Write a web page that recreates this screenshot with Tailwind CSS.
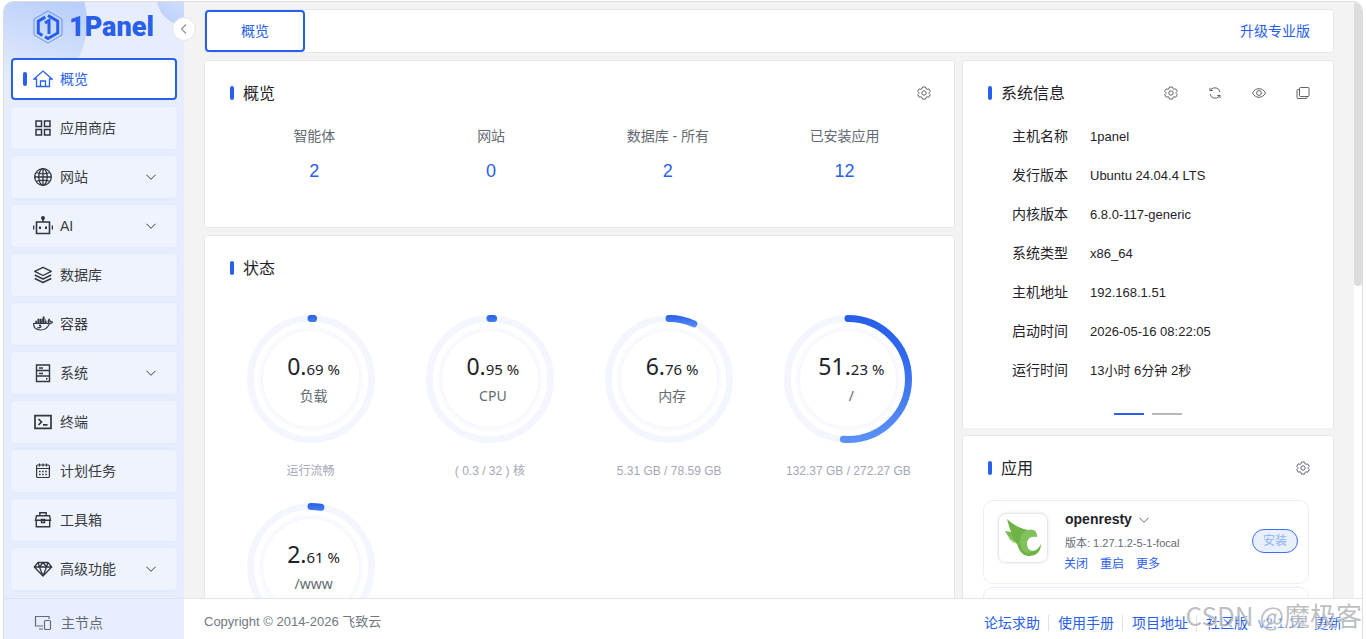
<!DOCTYPE html>
<html lang="zh-CN">
<head>
<meta charset="utf-8">
<meta name="viewport" content="width=device-width, initial-scale=1">
<title>1Panel</title>
<script src="https://cdn.jsdelivr.net/npm/@tailwindcss/browser@4"></script>
</head>
<body class="h-screen overflow-hidden bg-white pl-[3px] pt-px pr-[3px] font-['Liberation_Sans','Noto_Sans_CJK_SC',sans-serif] text-sm text-[#1f2329]">
<svg class="absolute size-0" aria-hidden="true">
  <defs>
    <linearGradient id="arcShort" gradientUnits="userSpaceOnUse" x1="0" y1="0" x2="0" y2="12"><stop offset="0" stop-color="#265ee9"/><stop offset="1" stop-color="#5a90f6"/></linearGradient>
    <linearGradient id="arcLong" gradientUnits="userSpaceOnUse" x1="0" y1="0" x2="0" y2="128"><stop offset="0" stop-color="#265ee9"/><stop offset="0.3" stop-color="#2f69ec"/><stop offset="1" stop-color="#5c92f6"/></linearGradient>
    <radialGradient id="halo" gradientUnits="userSpaceOnUse" cx="64" cy="64" r="57"><stop offset="0.84" stop-color="#f5f7fe"/><stop offset="0.95" stop-color="#fff"/></radialGradient>
  </defs>
  <symbol id="dial" viewBox="0 0 128 128">
    <circle cx="64" cy="64" r="60.500" fill="none" stroke="#f3f6fe" stroke-width="7"/>
    <circle cx="64" cy="64" r="57" fill="url(#halo)"/>
    <circle cx="64" cy="64" r="48" fill="#fff"/>
  </symbol>
  <symbol id="down" viewBox="0 0 12 12"><path d="M1.500 3.800 6 8.300l4.500-4.500" fill="none" stroke="currentColor"/></symbol>
  <symbol id="gear" viewBox="0 0 14 14"><g fill="none" stroke="currentColor" stroke-linejoin="round"><path d="M5.500 1h3l.5 1.700 1.100.6 1.700-.4 1.500 2.500L12.100 6.700v.7l1.200 1.300-1.500 2.500-1.700-.4-1.100.6-.5 1.700h-3L5 11.400l-1.100-.6-1.700.4-1.500-2.500 1.200-1.300v-.7L.7 5.400l1.500-2.500 1.700.4L5 2.700z"/><circle cx="7" cy="7" r="2.200"/></g></symbol>
</svg>

<div class="flex h-full flex-col overflow-hidden rounded-t-[10px] border border-b-0 border-[#dcdddf] bg-[#f3f3f4]">
  <div class="flex min-h-0 flex-1">

    <aside class="relative w-[180px] shrink-0 bg-[#e7edfd] text-[#393c43]">
      <svg class="absolute left-0 top-0 h-[120px] w-[180px]" viewBox="0 0 180 120" aria-hidden="true">
        <defs>
          <linearGradient id="blobA" x1="0.7" y1="0" x2="0.4" y2="1"><stop offset="0.3" stop-color="#b9cffa"/><stop offset="0.85" stop-color="#e7edfd"/></linearGradient>
          <linearGradient id="blobB" x1="0.2" y1="1" x2="0.8" y2="0.3"><stop offset="0" stop-color="#bdd1fa"/><stop offset="1" stop-color="#dbe6fd"/></linearGradient>
        </defs>
        <circle cx="2" cy="20" r="81" fill="url(#blobA)"/>
        <circle cx="180" cy="-4" r="27" fill="url(#blobB)"/>
      </svg>
      <button type="button" aria-label="收起菜单" class="absolute -right-3 top-[15px] z-10 flex size-6 items-center justify-center rounded-full border border-[#dfe3ec] bg-white text-[#8a8e96]">
        <svg class="size-3" viewBox="0 0 12 12"><path d="M8 1.500 3.500 6 8 10.500" fill="none" stroke="currentColor" stroke-width="1.100"/></svg>
      </button>
      <div class="relative flex h-full flex-col overflow-hidden px-[7px]">
        <a href="#" class="flex h-14 shrink-0 items-start gap-1.5 pl-[22px] pt-[7px] text-[#2860ec]">
          <svg class="h-9 w-[30px]" viewBox="0 0 30 36" fill="none" stroke="currentColor">
            <path d="M15 2 29 10v16L15 34 1 26V10z" stroke-width=".9" opacity=".65"/>
            <path d="m15 6.500 9.700 5.600v4.400M24.700 16v8L15 29.600l-3-1.800M9.500 26.400 5.300 24V12.100l7-4" stroke-width="3"/>
            <path d="m12 14 4-2.500V25" stroke-width="3"/>
          </svg>
          <span class="font-[Roboto] text-[27px] font-black leading-9">1Panel</span>
        </a>
        <nav class="flex flex-col gap-[7px]">
          <a href="#" class="flex h-[42px] shrink-0 items-center rounded border-2 border-[#2860ec] bg-white pl-[10px] text-[#2860ec]">
            <span class="h-3.5 w-1 rounded-sm bg-[#2860ec]"></span>
            <svg class="ml-[6px] mr-[7px] size-5" viewBox="0 0 20 20" fill="none" stroke="currentColor" stroke-width="1.300"><path d="M1 10 10 2l9 8h-2.500v7.500H12.500V12H7.500v5.500h-4V10zM7.500 17.500h5"/></svg>概览</a>
          <a href="#" class="flex h-[42px] shrink-0 items-center gap-[7px] rounded bg-[#eff3fe] pl-[22px] pr-5 shadow-[0_0_3px_#dbe4fb]">
            <svg class="size-5" viewBox="0 0 20 20" fill="none" stroke="#33363d" stroke-width="1.500"><path d="M3 3h5.500v5.500H3zM11.500 3H17v5.500h-5.500zM3 11.500h5.500V17H3zM11.500 11.500H17V17h-5.500z"/></svg>应用商店</a>
          <a href="#" class="flex h-[42px] shrink-0 items-center gap-[7px] rounded bg-[#eff3fe] pl-[22px] pr-5 shadow-[0_0_3px_#dbe4fb]">
            <svg class="size-5" viewBox="0 0 20 20" fill="none" stroke="#33363d" stroke-width="1.300"><circle cx="10" cy="10" r="8.300"/><ellipse cx="10" cy="10" rx="4.200" ry="8.300"/><path d="M10 1.500v17M1.500 10h17M3 5.500c4 1.500 10 1.500 14 0M3 14.500c4-1.500 10-1.500 14 0"/></svg>网站<svg class="ml-auto size-3"><use href="#down"/></svg></a>
          <a href="#" class="flex h-[42px] shrink-0 items-center gap-[7px] rounded bg-[#eff3fe] pl-[22px] pr-5 shadow-[0_0_3px_#dbe4fb]">
            <svg class="size-5" viewBox="0 0 20 20" fill="none" stroke="#33363d" stroke-width="1.600"><path d="M3.500 6h13v11.500h-13zM10 6V2M.5 9.500v4M19.500 9.500v4"/><path d="M7 10.500v2.500M13 10.500v2.500" stroke-width="2"/><circle cx="10" cy="2" r="1.200" fill="#33363d"/></svg>AI<svg class="ml-auto size-3"><use href="#down"/></svg></a>
          <a href="#" class="flex h-[42px] shrink-0 items-center gap-[7px] rounded bg-[#eff3fe] pl-[22px] pr-5 shadow-[0_0_3px_#dbe4fb]">
            <svg class="size-5" viewBox="0 0 20 20" fill="none" stroke="#33363d" stroke-width="1.400" stroke-linejoin="round"><path d="m10 2.300 8.300 4L10 10.500l-8.300-4.200zM1.700 10l8.300 4 8.300-4M1.700 13.500l8.300 4 8.300-4"/></svg>数据库</a>
          <a href="#" class="flex h-[42px] shrink-0 items-center gap-[7px] rounded bg-[#eff3fe] pl-[22px] pr-5 shadow-[0_0_3px_#dbe4fb]">
            <svg class="size-5" viewBox="0 0 20 20" fill="none" stroke="#33363d" stroke-width="1.200"><path d="M.6 9.500h13.600c1.200 0 1.700-1 1.300-2.200-.2-.8.100-1.500.5-2 .8.700 1.200 1.500 1.100 2.400 1-.2 1.800 0 2.400.4-.6 1-1.700 1.600-3.100 1.500-1.700 4.400-4.700 6.400-8.900 6.400-4.500 0-7-2.200-6.900-6.500z"/><path d="M2.300 7.900h12M4.500 5.800h8M9.700 3.600h2" stroke-width="2.100" stroke-dasharray="1.900 .4"/><path d="M4 14c2 0 3.500-.5 4.500-1.500"/><circle cx="7" cy="11.500" r=".5" fill="#33363d"/></svg>容器</a>
          <a href="#" class="flex h-[42px] shrink-0 items-center gap-[7px] rounded bg-[#eff3fe] pl-[22px] pr-5 shadow-[0_0_3px_#dbe4fb]">
            <svg class="size-5" viewBox="0 0 20 20" fill="none" stroke="#33363d" stroke-width="1.400"><path d="M3.500 2h13v16.500h-13zM3.500 7.500h13M3.500 13h13M6 5h4M6 10.500h4M13 15.800h1.500"/></svg>系统<svg class="ml-auto size-3"><use href="#down"/></svg></a>
          <a href="#" class="flex h-[42px] shrink-0 items-center gap-[7px] rounded bg-[#eff3fe] pl-[22px] pr-5 shadow-[0_0_3px_#dbe4fb]">
            <svg class="size-5" viewBox="0 0 20 20" fill="none" stroke="#33363d" stroke-width="1.700"><path d="M2 3.700h16v12.600H2zM5.500 7l3 3-3 3M10 12.800h4.500"/></svg>终端</a>
          <a href="#" class="flex h-[42px] shrink-0 items-center gap-[7px] rounded bg-[#eff3fe] pl-[22px] pr-5 shadow-[0_0_3px_#dbe4fb]">
            <svg class="size-5" viewBox="0 0 20 20" fill="none" stroke="#33363d" stroke-width="1.200"><rect x="3.600" y="4" width="12.800" height="12.500" rx="1"/><path d="M3.600 7.500h12.800M6.500 2.500v3M10 2.500v3M13.500 2.500v3"/><path d="M6 10.500h8M6 13.500h8" stroke-width="1.500" stroke-dasharray="1.600 1.500"/></svg>计划任务</a>
          <a href="#" class="flex h-[42px] shrink-0 items-center gap-[7px] rounded bg-[#eff3fe] pl-[22px] pr-5 shadow-[0_0_3px_#dbe4fb]">
            <svg class="size-5" viewBox="0 0 20 20" fill="none" stroke="#33363d" stroke-width="1.400"><path d="M3.500 5.700h13l1 4.500h-15zM3.300 10.200h13.400v6.600H3.300zM6.800 5.700V2.800h6.400v2.900M8.500 9.500h3v3h-3z"/></svg>工具箱</a>
          <a href="#" class="flex h-[42px] shrink-0 items-center gap-[7px] rounded bg-[#eff3fe] pl-[22px] pr-5 shadow-[0_0_3px_#dbe4fb]">
            <svg class="size-5" viewBox="0 0 20 20" fill="none" stroke="#33363d" stroke-width="1.300" stroke-linejoin="round"><path d="M5 3.500h10l3.700 4.500L10 17 1.300 8zM1.300 8h17.400M5 3.500 6.500 8 10 17l3.500-9L15 3.500M6.500 8 10 3.500 13.500 8"/></svg>高级功能<svg class="ml-auto size-3"><use href="#down"/></svg></a>
          <a href="#" aria-label="日志审计" class="h-[42px] shrink-0 rounded bg-[#eff3fe] shadow-[0_0_3px_#dbe4fb]"></a>
        </nav>
      </div>
    </aside>

    <main class="flex min-w-0 flex-1 flex-col gap-[7px] overflow-hidden pl-5 pr-5 pt-[7px]">
      <header class="flex h-11 shrink-0 items-center justify-between rounded border border-[#e4e7f0] bg-white pr-[23px]">
        <button type="button" class="h-[42px] w-[100px] rounded border-2 border-[#2860ec] text-[#2860ec]">概览</button>
        <a href="#" class="text-[#2860ec]">升级专业版</a>
      </header>
      <div class="flex gap-[7px]">
        <div class="flex min-w-0 flex-1 flex-col gap-[7px]">
          <section class="h-[168px] rounded border border-[#e4e7f0] bg-white px-[21px] pt-5">
            <div class="flex h-6 items-center pl-1">
              <span class="h-3.5 w-1 rounded-sm bg-[#2860ec]"></span>
              <h2 class="ml-[9px] pt-0.5 text-base">概览</h2>
              <button type="button" aria-label="设置" class="ml-auto text-[#5f636b]"><svg class="mr-[2px] size-3.5"><use href="#gear"/></svg></button>
            </div>
            <div class="mt-[21px] grid grid-cols-4 text-center text-[#646a73]">
              <div>智能体<a href="#" class="mt-[11px] block text-lg text-[#2860ec]">2</a></div>
              <div>网站<a href="#" class="mt-[11px] block text-lg text-[#2860ec]">0</a></div>
              <div>数据库 - 所有<a href="#" class="mt-[11px] block text-lg text-[#2860ec]">2</a></div>
              <div>已安装应用<a href="#" class="mt-[11px] block text-lg text-[#2860ec]">12</a></div>
            </div>
          </section>
          <section class="rounded border border-[#e4e7f0] bg-white px-[16px] pt-5">
            <div class="flex h-6 items-center pl-[9px]">
              <span class="h-3.5 w-1 rounded-sm bg-[#2860ec]"></span>
              <h2 class="ml-[9px] pt-0.5 text-base">状态</h2>
            </div>
            <div class="mt-[35px] grid grid-cols-4 gap-y-4 text-xs text-[#a3a7b5]">
              <div class="flex h-[172px] flex-col items-center">
                <div class="relative size-32">
                  <svg class="size-32" viewBox="0 0 128 128"><use href="#dial"/><path pathLength="100" d="M64 3.500a60.500 60.500 0 0 1 0 121a60.500 60.500 0 0 1 0-121" fill="none" stroke="url(#arcShort)" stroke-width="7" stroke-linecap="round" stroke-dasharray="0.69 200"/></svg>
                  <div class="absolute inset-0 flex flex-col items-center pl-1.5 pt-[35px] font-['Noto_Sans','Noto_Sans_CJK_SC',sans-serif]"><p class="text-[15px] leading-8 text-[#1f2329]"><span class="text-[23px]">0.</span>69 %</p><p class="text-sm leading-[22px] text-[#646a73]">负载</p></div>
                </div>
                <p class="mt-5">运行流畅</p>
              </div>
              <div class="flex h-[172px] flex-col items-center">
                <div class="relative size-32">
                  <svg class="size-32" viewBox="0 0 128 128"><use href="#dial"/><path pathLength="100" d="M64 3.500a60.500 60.500 0 0 1 0 121a60.500 60.500 0 0 1 0-121" fill="none" stroke="url(#arcShort)" stroke-width="7" stroke-linecap="round" stroke-dasharray="0.95 200"/></svg>
                  <div class="absolute inset-0 flex flex-col items-center pl-1.5 pt-[35px] font-['Noto_Sans','Noto_Sans_CJK_SC',sans-serif]"><p class="text-[15px] leading-8 text-[#1f2329]"><span class="text-[23px]">0.</span>95 %</p><p class="text-sm leading-[22px] text-[#646a73]">CPU</p></div>
                </div>
                <p class="mt-5">( 0.3 / 32 ) 核</p>
              </div>
              <div class="flex h-[172px] flex-col items-center">
                <div class="relative size-32">
                  <svg class="size-32" viewBox="0 0 128 128"><use href="#dial"/><path pathLength="100" d="M64 3.500a60.500 60.500 0 0 1 0 121a60.500 60.500 0 0 1 0-121" fill="none" stroke="url(#arcShort)" stroke-width="7" stroke-linecap="round" stroke-dasharray="6.76 200"/></svg>
                  <div class="absolute inset-0 flex flex-col items-center pl-1.5 pt-[35px] font-['Noto_Sans','Noto_Sans_CJK_SC',sans-serif]"><p class="text-[15px] leading-8 text-[#1f2329]"><span class="text-[23px]">6.</span>76 %</p><p class="text-sm leading-[22px] text-[#646a73]">内存</p></div>
                </div>
                <p class="mt-5">5.31 GB / 78.59 GB</p>
              </div>
              <div class="flex h-[172px] flex-col items-center">
                <div class="relative size-32">
                  <svg class="size-32" viewBox="0 0 128 128"><use href="#dial"/><path pathLength="100" d="M64 3.500a60.500 60.500 0 0 1 0 121a60.500 60.500 0 0 1 0-121" fill="none" stroke="url(#arcLong)" stroke-width="7" stroke-linecap="round" stroke-dasharray="51.23 200"/></svg>
                  <div class="absolute inset-0 flex flex-col items-center pl-1.5 pt-[35px] font-['Noto_Sans','Noto_Sans_CJK_SC',sans-serif]"><p class="text-[15px] leading-8 text-[#1f2329]"><span class="text-[23px]">51.</span>23 %</p><p class="text-sm leading-[22px] text-[#646a73]">/</p></div>
                </div>
                <p class="mt-5">132.37 GB / 272.27 GB</p>
              </div>
              <div class="flex h-[172px] flex-col items-center">
                <div class="relative size-32">
                  <svg class="size-32" viewBox="0 0 128 128"><use href="#dial"/><path pathLength="100" d="M64 3.500a60.500 60.500 0 0 1 0 121a60.500 60.500 0 0 1 0-121" fill="none" stroke="url(#arcShort)" stroke-width="7" stroke-linecap="round" stroke-dasharray="2.61 200"/></svg>
                  <div class="absolute inset-0 flex flex-col items-center pl-1.5 pt-[35px] font-['Noto_Sans','Noto_Sans_CJK_SC',sans-serif]"><p class="text-[15px] leading-8 text-[#1f2329]"><span class="text-[23px]">2.</span>61 %</p><p class="text-sm leading-[22px] text-[#646a73]">/www</p></div>
                </div>
              </div>
            </div>
          </section>
        </div>

        <div class="flex w-[372px] shrink-0 flex-col gap-[7px]">
          <section class="h-[368px] rounded-t border border-b-0 border-[#e4e7f0] bg-white px-[21px] pt-5">
            <div class="flex h-6 items-center pl-1">
              <span class="h-3.5 w-1 rounded-sm bg-[#2860ec]"></span>
              <h2 class="ml-[9px] pt-0.5 text-base">系统信息</h2>
              <div class="ml-auto mr-[2px] flex gap-[30px] text-[#5f636b]">
                <button type="button" aria-label="设置"><svg class="size-3.5"><use href="#gear"/></svg></button>
                <button type="button" aria-label="刷新"><svg class="size-3.5" viewBox="0 0 14 14" fill="none" stroke="currentColor"><path d="M12 6A5.200 5.200 0 0 0 3 3.500L2 4.500M2 1.800v2.700h2.700M2 8a5.200 5.200 0 0 0 9 2.500l1-1M12 12.200V9.500H9.300"/></svg></button>
                <button type="button" aria-label="显示"><svg class="size-3.5" viewBox="0 0 14 14" fill="none" stroke="currentColor"><path d="M.5 7C2 4.200 4.200 2.700 7 2.700S12 4.200 13.500 7C12 9.800 9.800 11.300 7 11.300S2 9.800.5 7z"/><circle cx="7" cy="7" r="2.400"/></svg></button>
                <button type="button" aria-label="复制"><svg class="size-3.5" viewBox="0 0 14 14" fill="none" stroke="currentColor"><rect x="3.500" y="1.500" width="9.500" height="9" rx="1"/><path d="M3.500 3.500H2a1 1 0 0 0-1 1v7a1 1 0 0 0 1 1h8a1 1 0 0 0 1-1v-1"/></svg></button>
              </div>
            </div>
            <dl class="mt-3 grid grid-cols-[78px_1fr] pl-7 text-[13px] leading-[39px] [&>dt]:text-sm [&>dt]:leading-[39px]">
              <dt>主机名称</dt><dd>1panel</dd>
              <dt>发行版本</dt><dd>Ubuntu 24.04.4 LTS</dd>
              <dt>内核版本</dt><dd>6.8.0-117-generic</dd>
              <dt>系统类型</dt><dd>x86_64</dd>
              <dt>主机地址</dt><dd>192.168.1.51</dd>
              <dt>启动时间</dt><dd>2026-05-16 08:22:05</dd>
              <dt>运行时间</dt><dd>13小时 6分钟 2秒</dd>
            </dl>
            <div class="mt-[23px] flex justify-center gap-2">
              <button type="button" aria-label="第 1 页" class="h-0.5 w-[30px] bg-[#2860ec]"></button>
              <button type="button" aria-label="第 2 页" class="h-0.5 w-[30px] bg-[#b5b8be]"></button>
            </div>
          </section>
          <section class="rounded border border-[#e4e7f0] bg-white pl-5 pr-[21px] pt-5">
            <div class="flex h-6 items-center pl-[5px]">
              <span class="h-3.5 w-1 rounded-sm bg-[#2860ec]"></span>
              <h2 class="ml-[9px] pt-0.5 text-base">应用</h2>
              <button type="button" aria-label="设置" class="ml-auto text-[#5f636b]"><svg class="mr-[2px] size-3.5"><use href="#gear"/></svg></button>
            </div>
            <article class="mt-5 mr-[3px] flex h-[84px] items-start rounded-[10px] border border-[#ecedf7] pl-[14px] pr-[10px] pt-[9px]">
              <div class="mt-[3px] flex size-[50px] items-center justify-center rounded-lg border border-[#e6e7ea] shadow-[0_0_3px_#e2e3e6]">
                <svg class="size-10" viewBox="0 0 40 40">
                  <path d="M5 19c3 2 6 2 9 2l1 5c-5-1-8-3-10-7z" fill="#a9d78d"/>
                  <path d="M2 13c5 0 9 2 13 6l1 6C9 23 5 19 2 13z" fill="#78bb50"/>
                  <path d="M4 1c8 7 14 10 22 11 6-1 8 3 8 7-7-2-11 3-10 8 1 8 10 8 14-1 0 8-5 12-12 12-7 0-10-6-12-12C10 21 7 12 4 1z" fill="#6db346"/>
                  <path d="M24 12h2c6-1 8 3 8 7-7-2-11 3-10 8 0 4 2 6 5 6-3 3-8 2-10-2-4-7-2-16 5-19z" fill="#82c25c"/>
                </svg>
              </div>
              <div class="ml-4 text-xs">
                <h3 class="flex items-center gap-1.5 pl-px text-sm font-bold leading-[19px]">openresty<svg class="size-3 text-[#646a73]"><use href="#down"/></svg></h3>
                <p class="mt-1 pl-px text-[11px] leading-5 text-[#646a73]">版本: 1.27.1.2-5-1-focal</p>
                <div class="mt-px flex gap-3 leading-5 text-[#2860ec]"><button type="button">关闭</button><button type="button">重启</button><button type="button">更多</button></div>
              </div>
              <button type="button" class="ml-auto mt-[19px] h-6 w-[46px] rounded-full border border-[#3b71ee] bg-[#e8effd] text-xs text-[#8fb0f5]">安装</button>
            </article>
            <article class="mt-[3px] mr-[3px] h-[84px] rounded-[10px] border border-[#ecedf7]"></article>
          </section>
        </div>
      </div>
    </main>
    <div class="w-2 shrink-0 bg-white"><div class="h-[284px] rounded-b bg-[#dcdddf]"></div></div>
  </div>

  <footer class="relative flex h-[41px] shrink-0 border-t border-[#e0e3ec] bg-white">
    <a href="#" class="flex w-[180px] shrink-0 items-center gap-2 bg-[#e8eefd] pl-[29px] pt-[7px] text-[#646a73]">
      <svg class="size-5" viewBox="0 0 20 20" fill="none" stroke="currentColor" stroke-width="1.200"><path d="M16 6V3.500H2.500V13H10M6 16h4"/><rect x="11.500" y="7.500" width="6" height="9" rx="1"/></svg>主节点</a>
    <div class="flex min-w-0 flex-1 items-center justify-between pl-5 pr-5">
      <p class="pt-1.5 text-[13px] text-[#73777f]">Copyright © 2014-2026 飞致云</p>
      <div class="flex items-center pt-[8px] text-[#2860ec]">
        <a href="#">论坛求助</a><span class="mx-2 h-4 border-l border-[#dfe2ea]"></span>
        <a href="#" class="ml-px">使用手册</a><span class="mx-2 h-4 border-l border-[#dfe2ea]"></span>
        <a href="#" class="ml-px">项目地址</a><span class="mx-2 h-4 border-l border-[#dfe2ea]"></span>
        <a href="#" class="ml-px">社区版</a><a href="#" class="ml-2.5 text-[#759cf3]">v2.1.12</a><a href="#" class="ml-2.5">更新</a>
      </div>
    </div>
    <p class="pointer-events-none absolute right-0 top-0 whitespace-nowrap font-['Noto_Sans_CJK_SC',sans-serif] text-[26px] leading-8 text-[#8f9299]/60 [text-shadow:1px_1px_0_#ffffffb3]">CSDN @魔极客</p>
  </footer>
</div>
</body>
</html>
